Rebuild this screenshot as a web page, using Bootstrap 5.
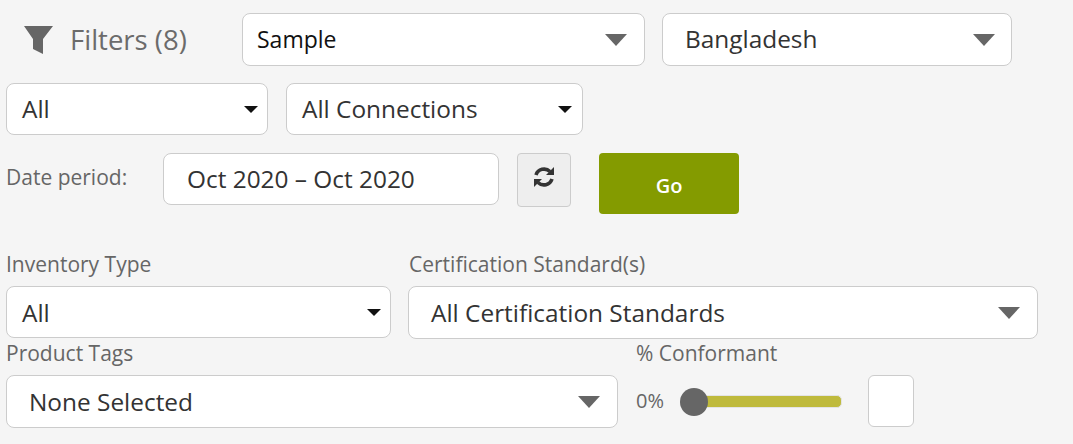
<!DOCTYPE html>
<html lang="en">

<head>
    <meta charset="UTF-8">
    <title>Filters</title>
    <link href="https://cdn.jsdelivr.net/npm/bootstrap@5.3.0/dist/css/bootstrap.min.css" rel="stylesheet">
    <style>
        body {
            background: #f5f5f5;
            font-family: "Open Sans", "Liberation Sans", sans-serif;
            color: #666;
            overflow: hidden;
        }

        .filter-page {
            padding: 13px 0 0 6px;
            width: 1073px;
        }

        .filter-title {
            width: 236px;
            padding-left: 17px;
            font-size: 27.5px;
            height: 53px;
            gap: 17px;
            color: #6b6b6b;
        }

        .pick-box {
            background: #fff;
            border: 1px solid #ccc;
            border-radius: 8px;
            font-size: 24.4px;
            color: #333;
            height: 52px;
            padding: 0 15px;
        }

        .pick-small {
            padding-right: 9px;
        }

        .pick-big {
            height: 53px;
            padding: 0 22px;
        }

        .pick-low span:first-child {
            padding-top: 2px;
        }

        .caret-sm {
            border-left: 7px solid transparent;
            border-right: 7px solid transparent;
            border-top: 7px solid #111;
        }

        .caret-lg {
            border-left: 11.5px solid transparent;
            border-right: 11.5px solid transparent;
            border-top: 12px solid #666;
        }

        .w-sample { width: 403px; margin-right: 17px; padding-left: 14px; padding-right: 17px; color: #111; font-size: 23px; }
        .w-country { width: 350px; padding-right: 16px; }
        .w-all { width: 262px; margin-right: 18px; }
        .w-conn { width: 297px; padding-right: 10px; }
        .w-date { width: 336px; margin-right: 18px; padding: 0 23px; }
        .w-inv { width: 385px; margin-right: 17px; }
        .w-cert { width: 630px; }
        .w-tags { width: 612px; margin-right: 18px; }
        .pad-end { padding-right: 17px; }

        .date-label {
            width: 157px;
            font-size: 21px;
            padding-top: 9px;
        }

        .reload-btn {
            width: 54px;
            height: 54px;
            background: #eee;
            border: 1px solid #ccc;
            border-radius: 4px;
            margin-right: 28px;
            padding-bottom: 6px;
        }

        .go-btn {
            width: 140px;
            height: 61px;
            background: #849b00;
            border: 0;
            border-radius: 4px;
            color: #fff;
            font-size: 20px;
            font-weight: 600;
            padding-top: 11px;
        }

        .go-btn:hover {
            background: #849b00;
            color: #fff;
        }

        .field-label {
            font-size: 21px;
            line-height: 29px;
            margin-bottom: 7px;
        }

        .cert-label {
            padding-left: 1px;
        }

        .slider-track {
            width: 148px;
            height: 13px;
            background: #bfba3c;
            border: 1px solid #e4e4e4;
            border-radius: 5px;
            margin-left: 30px;
        }

        .slider-dot {
            position: absolute;
            left: -15px;
            top: -8px;
            width: 28px;
            height: 28px;
            background: #666;
            border-radius: 50%;
        }

        .pct-box {
            width: 46px;
            height: 52px;
            background: #fff;
            border: 1px solid #ccc;
            border-radius: 6px;
            margin-left: 26px;
        }

        .pct-text {
            font-size: 20px;
            width: 28px;
        }
    </style>
</head>

<body>
    <div class="filter-page">
        <!-- top row -->
        <div class="d-flex" style="margin-bottom: 17px">
            <div class="filter-title d-flex align-items-center">
                <svg width="30" height="30" viewBox="0 0 30 30">
                    <path d="M1 1 H30 L20 14 V29 L10 24 V14 Z" fill="#666" />
                </svg>
                <span>Filters (8)</span>
            </div>
            <div class="pick-box pick-big w-sample d-flex align-items-center justify-content-between">
                <span>Sample</span><span class="caret-lg"></span>
            </div>
            <div class="pick-box pick-big w-country d-flex align-items-center justify-content-between">
                <span>Bangladesh</span><span class="caret-lg"></span>
            </div>
        </div>

        <div class="d-flex" style="margin-bottom: 18px">
            <div class="pick-box pick-small w-all d-flex align-items-center justify-content-between">
                <span>All</span><span class="caret-sm"></span>
            </div>
            <div class="pick-box w-conn d-flex align-items-center justify-content-between">
                <span>All Connections</span><span class="caret-sm"></span>
            </div>
        </div>

        <!-- date period -->
        <div class="d-flex align-items-start" style="margin-bottom: 36px">
            <div class="date-label">Date period:</div>
            <div class="pick-box w-date d-flex align-items-center">Oct 2020 – Oct 2020</div>
            <div class="reload-btn d-flex align-items-center justify-content-center">
                <svg width="22" height="22" viewBox="0 0 22 22" fill="none" stroke="#333" stroke-width="3.600">
                    <path d="M3 9 A8.500 8.500 0 0 1 17 5.500" />
                    <path d="M19 13 A8.500 8.500 0 0 1 5 16.500" />
                    <path d="M21 1 V9 H13 Z" fill="#333" stroke="none" />
                    <path d="M1 21 V13 H9 Z" fill="#333" stroke="none" />
                </svg>
            </div>
            <button type="button" class="btn go-btn">Go</button>
        </div>

        <div class="d-flex">
            <div class="w-inv">
                <div class="field-label">Inventory Type</div>
                <div class="pick-box pick-small pick-low d-flex align-items-center justify-content-between">
                    <span>All</span><span class="caret-sm"></span>
                </div>
            </div>
            <div class="w-cert">
                <div class="field-label cert-label">Certification Standard(s)</div>
                <div class="pick-box pick-big pick-low pad-end d-flex align-items-center justify-content-between">
                    <span>All Certification Standards</span><span class="caret-lg"></span>
                </div>
            </div>
        </div>

        <div class="d-flex">
            <div class="w-tags">
                <div class="field-label">Product Tags</div>
                <div class="pick-box pick-big pick-low pad-end d-flex align-items-center justify-content-between">
                    <span>None Selected</span><span class="caret-lg"></span>
                </div>
            </div>
            <div>
                <div class="field-label">% Conformant</div>
                <div class="d-flex align-items-center">
                    <span class="pct-text">0%</span>
                    <div class="slider-track position-relative">
                        <span class="slider-dot"></span>
                    </div>
                    <div class="pct-box"></div>
                </div>
            </div>
        </div>
    </div>

    <script src="https://cdn.jsdelivr.net/npm/bootstrap@5.3.0/dist/js/bootstrap.bundle.min.js"></script>
</body>

</html>
